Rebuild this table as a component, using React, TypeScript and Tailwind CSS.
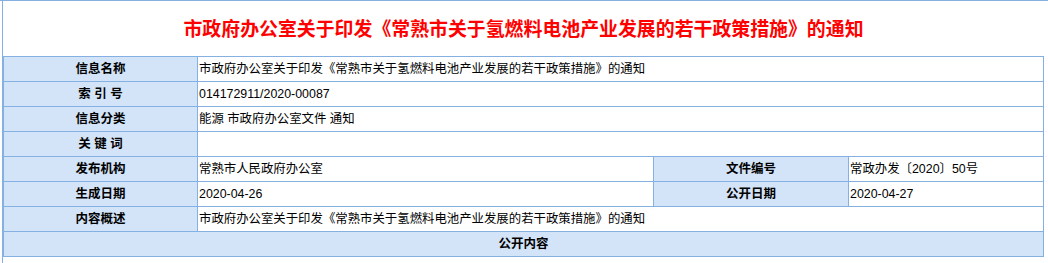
const font = { fontFamily: '"Liberation Sans", "Noto Sans CJK SC", sans-serif' };

function Label({ children, w }: { children: React.ReactNode; w: string }) {
  return (
    <div
      className={`${w} h-[25px] shrink-0 border-r border-b border-[#84b1e2] bg-[#d3e4f8] flex items-center justify-center font-bold text-[12.5px] text-black`}
    >
      {children}
    </div>
  );
}

function Value({ children, w }: { children?: React.ReactNode; w: string }) {
  return (
    <div
      className={`${w} h-[25px] shrink-0 border-r border-b border-[#84b1e2] bg-white flex items-center pl-[1px] text-[12.4px] text-black whitespace-nowrap`}
    >
      {children}
    </div>
  );
}

const rows: [string, string][] = [
  ['信息名称', '市政府办公室关于印发《常熟市关于氢燃料电池产业发展的若干政策措施》的通知'],
  ['索 引 号', '014172911/2020-00087'],
  ['信息分类', '能源 市政府办公室文件 通知'],
  ['关 键 词', ''],
];

export default function App() {
  return (
    <div className="w-[1048px] h-[263px] bg-white overflow-hidden" style={font}>
      <div className="border-t border-[#84b1e2]">
        <div className="ml-[2px] border-l border-[#84b1e2] h-[262px]">
          <div className="h-[55px] flex items-center justify-center pr-[4px] pt-[3px]">
            <h1 className="text-[18.9px] font-bold text-[#ff0000] leading-none">
              市政府办公室关于印发《常熟市关于氢燃料电池产业发展的若干政策措施》的通知
            </h1>
          </div>
          <div className="w-[1041px] border-t border-l border-[#84b1e2]">
            {rows.map(([k, v]) => (
              <div key={k} className="flex">
                <Label w="w-[194px]">{k}</Label>
                <Value w="w-[846px]">{v}</Value>
              </div>
            ))}
            <div className="flex">
              <Label w="w-[194px]">发布机构</Label>
              <Value w="w-[456px]">常熟市人民政府办公室</Value>
              <Label w="w-[195px]">文件编号</Label>
              <Value w="w-[195px]">常政办发〔2020〕50号</Value>
            </div>
            <div className="flex">
              <Label w="w-[194px]">生成日期</Label>
              <Value w="w-[456px]">2020-04-26</Value>
              <Label w="w-[195px]">公开日期</Label>
              <Value w="w-[195px]">2020-04-27</Value>
            </div>
            <div className="flex">
              <Label w="w-[194px]">内容概述</Label>
              <Value w="w-[846px]">市政府办公室关于印发《常熟市关于氢燃料电池产业发展的若干政策措施》的通知</Value>
            </div>
            <div className="flex">
              <Label w="w-[1040px]">公开内容</Label>
            </div>
          </div>
        </div>
      </div>
    </div>
  );
}
